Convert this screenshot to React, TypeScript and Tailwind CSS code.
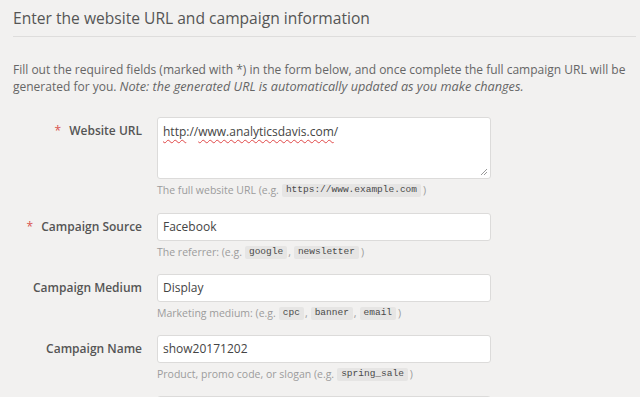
import React from "react";

const Chip = ({ children }: { children: React.ReactNode }) => (
  <span className="inline-flex h-[13px] items-center rounded-[2px] bg-[#e6e5e4] px-[4px] align-middle text-[9.5px] text-[#4a4a4a] [font-family:'Liberation_Mono',monospace]">
    {children}
  </span>
);

const Row = ({
  label,
  required,
  field,
  help,
  mb = "mb-[13px]",
}: {
  label: string;
  required?: boolean;
  field: React.ReactNode;
  help: React.ReactNode;
  mb?: string;
}) => (
  <div className={`grid grid-cols-[129px_334px] gap-x-[15px] ${mb}`}>
    <div className="flex h-[28px] items-center justify-end text-[12px] font-semibold text-[#555]">
      {required && <span className="mr-[8px] font-normal text-[#d9534f]">*</span>}
      <span>{label}</span>
    </div>
    <div>
      {field}
      <div className="mt-[3px] flex h-[17px] items-center text-[10.5px] text-[#9c9c9c]">{help}</div>
    </div>
  </div>
);

const Input = ({ value }: { value: string }) => (
  <div className="flex h-[28px] items-center rounded-[3px] border border-[#dcdbda] bg-white pl-[5px] text-[12px] text-[#444]">
    {value}
  </div>
);

export default function App() {
  return (
    <div className="h-[397px] w-[640px] overflow-hidden bg-[#f2f1f0] [font-family:'Open_Sans',sans-serif]">
      <div className="pl-[13px] pr-[4px]">
        <div className="border-b border-[#dedddc] pt-[6px] pb-[6px] text-[15.6px] leading-[24px] text-[#555]">
          Enter the website URL and campaign information
        </div>
        <p className="mt-[24px] text-[12px] leading-[17px] text-[#666]">
          Fill out the required fields (marked with *) in the form below, and once complete the full campaign URL will be
          generated for you. <em className="text-[12.7px]">Note: the generated URL is automatically updated as you make changes.</em>
        </p>
      </div>
      <div className="mt-[22px] pl-[13px]">
        <Row
          label="Website URL"
          required
          mb="mb-[14px]"
          field={
            <div className="relative h-[62px] rounded-[3px] border border-[#dcdbda] bg-white pl-[5px] pt-[5px] text-[12px] leading-[17px] text-[#444]">
              <span className="underline decoration-[#e04848] decoration-wavy decoration-1 underline-offset-[3px]">http</span>
              ://
              <span className="underline decoration-[#e04848] decoration-wavy decoration-1 underline-offset-[3px]">
                www.analyticsdavis.com
              </span>
              /
              <svg className="absolute bottom-[2px] right-[2px]" width="8" height="8" viewBox="0 0 8 8">
                <path d="M7 1 L1 7 M7 4 L4 7" stroke="#9a9a9a" strokeWidth="1" fill="none" />
              </svg>
            </div>
          }
          help={
            <>
              <span className="mr-[3px]">The full website URL (e.g.</span>
              <Chip>https://www.example.com</Chip>
              <span className="ml-[2px]">)</span>
            </>
          }
        />
        <Row
          label="Campaign Source"
          required
          field={<Input value="Facebook" />}
          help={
            <>
              <span className="mr-[3px]">The referrer: (e.g.</span>
              <Chip>google</Chip>
              <span className="ml-[1px] mr-[3px]">,</span>
              <Chip>newsletter</Chip>
              <span className="ml-[2px]">)</span>
            </>
          }
        />
        <Row
          label="Campaign Medium"
          field={<Input value="Display" />}
          help={
            <>
              <span className="mr-[3px]">Marketing medium: (e.g.</span>
              <Chip>cpc</Chip>
              <span className="ml-[1px] mr-[3px]">,</span>
              <Chip>banner</Chip>
              <span className="ml-[1px] mr-[3px]">,</span>
              <Chip>email</Chip>
              <span className="ml-[2px]">)</span>
            </>
          }
        />
        <Row
          label="Campaign Name"
          field={<Input value="show20171202" />}
          help={
            <>
              <span className="mr-[3px]">Product, promo code, or slogan (e.g.</span>
              <Chip>spring_sale</Chip>
              <span className="ml-[2px]">)</span>
            </>
          }
        />
        <Row label="" field={<Input value="" />} help={null} />
      </div>
    </div>
  );
}
